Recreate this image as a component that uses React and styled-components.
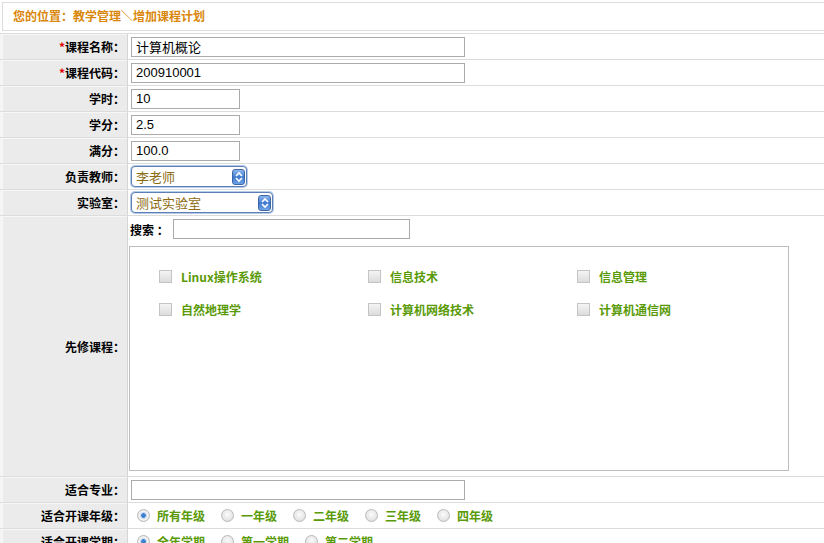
import React from 'react';
import styled, { createGlobalStyle } from 'styled-components';

const GlobalStyle = createGlobalStyle`
  html, body {
    margin: 0;
    padding: 0;
    background: #fff;
    font-family: "Liberation Sans", "Noto Sans CJK SC", sans-serif;
    font-size: 12px;
    color: #000;
  }
`;

const courses = [
	'Linux操作系统',
	'信息技术',
	'信息管理',
	'自然地理学',
	'计算机网络技术',
	'计算机通信网',
];

const grades = ['所有年级', '一年级', '二年级', '三年级', '四年级'];
const terms = ['全年学期', '第一学期', '第二学期'];

const Field = ({ label, required, tall, children }) => (
	<Row $tall={tall}>
		<Label>
			{required && <Star>*</Star>}
			{label}：
		</Label>
		<Value $tall={tall}>{children}</Value>
	</Row>
);

const Select = ({ value, width }) => (
	<SelectBox $width={width}>
		<span>{value}</span>
		<Stepper>
			<svg width="8" height="12" viewBox="0 0 8 12">
				<path d="M1 5 L4 2 L7 5" fill="none" stroke="#fff" strokeWidth="1.6" />
				<path d="M1 7 L4 10 L7 7" fill="none" stroke="#fff" strokeWidth="1.6" />
			</svg>
		</Stepper>
	</SelectBox>
);

const App = () => {
	return (
		<Page>
			<GlobalStyle />
			<Crumb>您的位置：教学管理＼增加课程计划</Crumb>
			<Form>
				<Field label="课程名称" required>
					<Input $width={334} defaultValue="计算机概论" />
				</Field>
				<Field label="课程代码" required>
					<Input $width={334} defaultValue="200910001" />
				</Field>
				<Field label="学时">
					<Input $width={109} defaultValue="10" />
				</Field>
				<Field label="学分">
					<Input $width={109} defaultValue="2.5" />
				</Field>
				<Field label="满分">
					<Input $width={109} defaultValue="100.0" />
				</Field>
				<Field label="负责教师">
					<Select value="李老师" width={116} />
				</Field>
				<Field label="实验室">
					<Select value="测试实验室" width={142} />
				</Field>
				<Field label="先修课程" tall>
					<Search>
						<b>搜索 ：</b>
						<Input $width={237} />
					</Search>
					<CourseBox>
						{courses.map((c) => (
							<Choice key={c}>
								<Check />
								<Green>{c}</Green>
							</Choice>
						))}
					</CourseBox>
				</Field>
				<Field label="适合专业">
					<Input $width={334} />
				</Field>
				<Field label="适合开课年级">
					<Radios>
						{grades.map((g, i) => (
							<RadioItem key={g}>
								<Radio $on={i === 0} />
								<Green>{g}</Green>
							</RadioItem>
						))}
					</Radios>
				</Field>
				<Field label="适合开课学期">
					<Radios>
						{terms.map((t, i) => (
							<RadioItem key={t}>
								<Radio $on={i === 0} />
								<Green>{t}</Green>
							</RadioItem>
						))}
					</Radios>
				</Field>
			</Form>
		</Page>
	);
};

const Page = styled.div`
  padding-top: 2px;
  height: 543px;
  overflow: hidden;
`;

const Crumb = styled.div`
  margin-left: 2px;
  height: 27px;
  border: 1px solid #dcdcdc;
  border-right: none;
  padding-left: 10px;
  line-height: 26px;
  font-weight: bold;
  color: #d9870b;
  font-family: "Noto Sans CJK SC", sans-serif;
`;

const Form = styled.div`
  margin-top: 2px;
  border-top: 1px solid #dcdcdc;
`;

const Row = styled.div`
  display: grid;
  grid-template-columns: 128px 1fr;
  height: ${(p) => (p.$tall ? '260px' : '25px')};
  border-bottom: 1px solid #dcdcdc;
`;

const Label = styled.div`
  display: flex;
  align-items: center;
  justify-content: flex-end;
  padding-right: 2px;
  background: #ebebeb;
  border-left: 2px solid #f4f4f4;
  border-right: 1px solid #d6d6d6;
  box-shadow: inset 1px 1px 0 #f7f7f7;
  font-weight: bold;
  font-family: "Noto Sans CJK SC", sans-serif;
  font-size: 12px;
`;

const Star = styled.span`
  color: #e00000;
`;

const Value = styled.div`
  display: flex;
  flex-direction: ${(p) => (p.$tall ? 'column' : 'row')};
  align-items: ${(p) => (p.$tall ? 'flex-start' : 'center')};
  padding-left: ${(p) => (p.$tall ? '1px' : '3px')};
  padding-top: ${(p) => (p.$tall ? '3px' : '0')};
`;

const Input = styled.input`
  box-sizing: border-box;
  width: ${(p) => p.$width}px;
  height: 20px;
  border: 1px solid #ababab;
  padding: 0 4px;
  font-family: "Liberation Sans", "Noto Sans CJK SC", sans-serif;
  font-size: 13px;
  color: #000;
  outline: none;
`;

const SelectBox = styled.div`
  box-sizing: border-box;
  width: ${(p) => p.$width}px;
  height: 21px;
  display: flex;
  align-items: center;
  justify-content: space-between;
  border: 1px solid #5d7fb5;
  border-radius: 4px;
  box-shadow: 0 0 0 1px #b6cbe8;
  padding: 0 1px 0 4px;
  color: #8c6a12;
  font-family: "Noto Sans CJK SC", sans-serif;
  font-size: 13px;
  background: #fff;
`;

const Stepper = styled.div`
  width: 13px;
  height: 16px;
  border-radius: 3px;
  display: grid;
  place-items: center;
  background: linear-gradient(#8fb8ee, #3f79cf 50%, #6ea3e6);
  border: 1px solid #3c66a8;
  box-sizing: border-box;
`;

const Search = styled.div`
  display: flex;
  align-items: center;
  gap: 4px;
  height: 20px;
  padding-left: 1px;
  font-family: "Noto Sans CJK SC", sans-serif;
  b {
    font-weight: bold;
  }
`;

const CourseBox = styled.div`
  box-sizing: border-box;
  margin-top: 7px;
  width: 660px;
  height: 225px;
  border: 1px solid #bcbcbc;
  padding: 21px 0 0 29px;
  display: grid;
  grid-template-columns: 209px 209px 1fr;
  grid-auto-rows: 33px;
  align-content: start;
`;

const Choice = styled.div`
  display: flex;
  align-items: center;
  gap: 9px;
  height: 16px;
`;

const Check = styled.span`
  box-sizing: border-box;
  width: 13px;
  height: 13px;
  border: 1px solid #c4c4c4;
  background: linear-gradient(#f4f4f4, #dcdcdc);
`;

const Green = styled.span`
  color: #5a9a07;
  font-weight: bold;
  font-family: "Noto Sans CJK SC", sans-serif;
  font-size: 12px;
`;

const Radios = styled.div`
  display: flex;
  align-items: center;
  padding-left: 6px;
  gap: 16px;
`;

const RadioItem = styled.label`
  display: flex;
  align-items: center;
  gap: 7px;
`;

const Radio = styled.span`
  box-sizing: border-box;
  width: 13px;
  height: 13px;
  border-radius: 50%;
  border: 1px solid #b9b9b9;
  background: ${(p) =>
		p.$on
			? 'radial-gradient(circle, #3f7fd0 0 2px, #b7d2f0 2.5px, #f2f2f2 4px, #dedede)'
			: 'radial-gradient(circle at 50% 40%, #fafafa, #dadada)'};
`;

export default App;
